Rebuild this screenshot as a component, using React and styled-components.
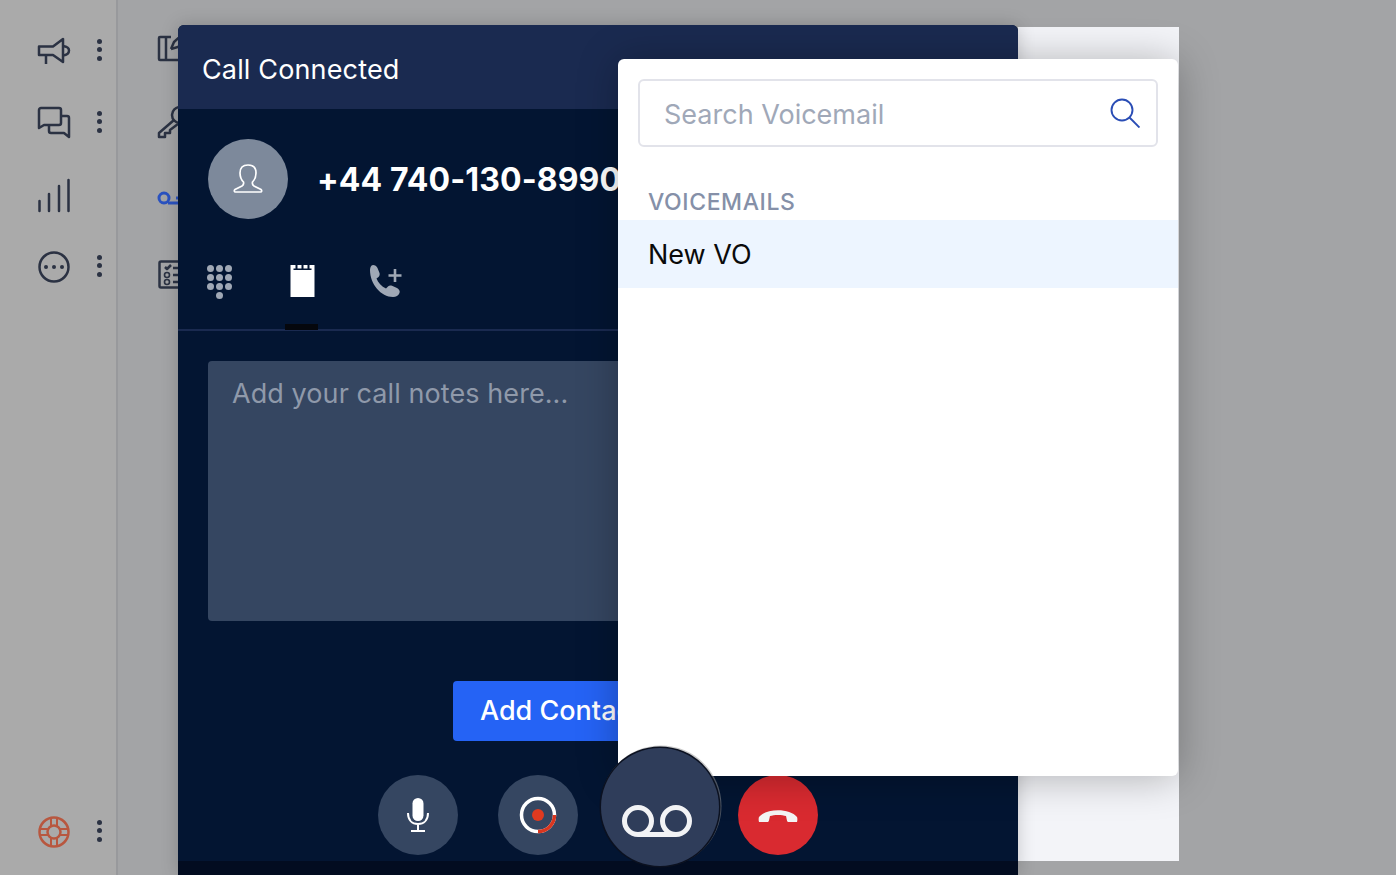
import React from 'react';
import styled, { createGlobalStyle } from 'styled-components';

const Global = createGlobalStyle`
  html, body { margin: 0; padding: 0; height: 100%; overflow: hidden; }
  body { font-family: Inter, "Noto Sans", "Liberation Sans", sans-serif; background: #a3a4a6; }
  #root { height: 100%; }
`;

const Page = styled.div`
  position: relative;
  display: flex;
  height: 100vh;
  overflow: hidden;
  background: #a3a4a6;
`;

const Rail = styled.nav`
  flex: none;
  box-sizing: border-box;
  width: 118px;
  padding-top: 15px;
  display: flex;
  flex-direction: column;
  background: #aaaaaa;
  border-right: 2px solid #98999c;
`;

const RailRow = styled.div`
  height: 72px;
  display: flex;
  align-items: center;
  padding-left: 38px;
  gap: 27px;
  color: ${(p) => p.$color || '#2b3243'};
`;

const RailFoot = styled(RailRow)`
  margin-top: auto;
  margin-bottom: 7px;
`;

const RailIcon = styled.svg`
  flex: none;
  width: 32px;
  height: 32px;
  overflow: visible;
  fill: none;
  stroke: currentColor;
  stroke-width: 2.5;
  stroke-linejoin: round;
`;

const Kebab = styled.span`
  display: flex;
  flex-direction: column;
  gap: 3.5px;
  margin-top: -3px;
  i { width: 5px; height: 5px; border-radius: 50%; background: #2b3243; }
`;

const SubRail = styled.div`
  flex: none;
  box-sizing: border-box;
  width: 60px;
  padding: 32px 0 0 40px;
  display: flex;
  flex-direction: column;
  gap: 44px;
  overflow: hidden;
`;

const SubIcon = styled.svg`
  flex: none;
  display: block;
  width: 32px;
  height: 32px;
  overflow: visible;
  fill: none;
  stroke: ${(p) => p.$color || '#2b3243'};
  stroke-width: ${(p) => p.$weight || 2.5};
  stroke-linejoin: round;
`;

const CallPanel = styled.section`
  flex: none;
  width: 840px;
  margin-top: 25px;
  display: flex;
  flex-direction: column;
  background: #031532;
  border-radius: 6px 6px 0 0;
  box-shadow: 0 0 18px rgba(0, 0, 0, 0.18);
  z-index: 1;
  overflow: hidden;
`;

const PanelHeader = styled.header`
  flex: none;
  height: 84px;
  box-sizing: border-box;
  padding: 4px 0 0 24px;
  display: flex;
  align-items: center;
  background: #1a2a50;
  color: #fff;
  font-size: 27px;
  letter-spacing: 0.15px;
`;

const Caller = styled.div`
  display: flex;
  align-items: center;
  gap: 29px;
  padding: 30px 0 0 30px;
`;

const Avatar = styled.div`
  width: 80px;
  height: 80px;
  border-radius: 50%;
  background: #7d899b;
  svg { display: block; width: 80px; height: 80px; fill: none; stroke: #fff; stroke-width: 1.7; }
`;

const Number = styled.div`
  color: #fff;
  font-size: 32px;
  font-weight: 700;
  letter-spacing: 0.1px;
  white-space: nowrap;
`;

const Tabs = styled.div`
  display: flex;
  height: 85px;
  margin-top: 27px;
  box-sizing: border-box;
  border-bottom: 2px solid #1a2a50;
`;

const Tab = styled.div`
  position: relative;
  width: 83px;
  padding-top: 19px;
  display: flex;
  justify-content: center;
  ${(p) => p.$active && `
    &::after {
      content: "";
      position: absolute;
      left: 24px;
      bottom: -1px;
      width: 33px;
      height: 6px;
      background: #05070d;
    }
  `}
`;

const Keypad = styled.div`
  display: grid;
  grid-template-columns: repeat(3, 7px);
  grid-auto-rows: 7px;
  gap: 2px;
  height: 34px;
  i { border-radius: 50%; background: #a0a8b5; }
  i:last-child { grid-column: 2; }
`;

const TabIcon = styled.svg`
  display: block;
  width: 34px;
  height: 34px;
`;

const Notes = styled.div`
  flex: 1;
  padding: 30px 30px 0;
`;

const NotesBox = styled.div`
  box-sizing: border-box;
  height: 260px;
  padding: 17px 24px;
  border-radius: 4px;
  background: #354661;
  color: #8f99aa;
  font-size: 27px;
  line-height: 32px;
  letter-spacing: 0.08px;
`;

const AddButton = styled.button`
  display: block;
  width: 290px;
  height: 60px;
  margin: 60px 0 0 245px;
  padding: 0 0 2px 27px;
  border: 0;
  border-radius: 4px;
  background: #2563f5;
  color: #fff;
  font: 500 27px Inter, "Noto Sans", sans-serif;
  text-align: left;
  white-space: nowrap;
`;

const Controls = styled.div`
  display: flex;
  gap: 40px;
  margin: 33px 0 6px 200px;
`;

const RoundButton = styled.button`
  flex: none;
  width: 80px;
  height: 80px;
  padding: 0;
  border: 0;
  border-radius: 50%;
  display: flex;
  align-items: center;
  justify-content: center;
  background: ${(p) => p.$bg || '#354661'};
  svg { display: block; }
`;

const Strip = styled.div`
  flex: none;
  height: 14px;
  background: #020c20;
`;

const Sheet = styled.div`
  flex: none;
  width: 161px;
  height: 834px;
  margin-top: 27px;
  background: #f3f4f8;
`;

const Popover = styled.aside`
  position: absolute;
  left: 618px;
  top: 59px;
  width: 560px;
  height: 717px;
  z-index: 2;
  background: #fff;
  border-radius: 6px;
  box-shadow: 0 2px 40px rgba(0, 0, 0, 0.28);
`;

const SearchBox = styled.div`
  box-sizing: border-box;
  height: 68px;
  margin: 20px 20px 0;
  padding: 2px 16px 0 24px;
  display: flex;
  align-items: center;
  justify-content: space-between;
  border: 2px solid #e2e3ea;
  border-radius: 6px;
  color: #a0a8b8;
  font-size: 27px;
  svg { display: block; width: 30px; height: 30px; margin-top: -2px; fill: none; stroke: #2a4db5; stroke-width: 1.9; }
`;

const SectionLabel = styled.div`
  margin: 41px 0 0 30px;
  height: 32px;
  line-height: 28px;
  color: #8590a8;
  font-size: 23px;
  font-weight: 500;
  letter-spacing: 0.6px;
`;

const VoicemailRow = styled.div`
  height: 68px;
  padding-left: 30px;
  display: flex;
  align-items: center;
  background: #edf5ff;
  color: #0a0a0a;
  font-size: 27px;
`;

const ActiveVoicemail = styled.button`
  position: absolute;
  left: 601px;
  top: 748px;
  z-index: 3;
  box-sizing: border-box;
  width: 118px;
  height: 118px;
  padding: 28px 0 0;
  border: 0;
  border-radius: 50%;
  display: flex;
  align-items: center;
  justify-content: center;
  background: #2f3d5a;
  box-shadow: 0 0 0 1.5px #0b1120, 1px -1px 0 1.5px rgba(150, 150, 150, 0.5);
  svg { display: block; margin-left: -6px; }
`;

const Dots = () => (
  <Kebab><i /><i /><i /></Kebab>
);

const App = () => (
  <Page>
    <Global />
    <Rail>
      <RailRow>
        <RailIcon viewBox="0 0 32 32">
          <path d="M1 11.500h14l10-7.500v23l-10-7H1z" />
          <path d="M25 11c4 .5 6 2 6 4.500S29 20 25 20.500M8 20v9" />
        </RailIcon>
        <Dots />
      </RailRow>
      <RailRow>
        <RailIcon viewBox="0 0 32 32">
          <path d="M3 1h18a2 2 0 0 1 2 2v13a2 2 0 0 1-2 2H6l-5 3V3a2 2 0 0 1 2-2z" />
          <path d="M23 9h6a2 2 0 0 1 2 2v19l-5-4H13a2 2 0 0 1-2-2v-6" />
        </RailIcon>
        <Dots />
      </RailRow>
      <RailRow>
        <RailIcon viewBox="0 0 32 32">
          <path strokeLinecap="round" d="M1.500 32v-10M11 32V15M21 32V7M30.500 32V1" />
        </RailIcon>
      </RailRow>
      <RailRow>
        <RailIcon viewBox="0 0 32 32">
          <circle cx="16" cy="16" r="14.500" />
          <circle cx="8" cy="16" r="2" fill="currentColor" stroke="none" />
          <circle cx="16" cy="16" r="2" fill="currentColor" stroke="none" />
          <circle cx="24" cy="16" r="2" fill="currentColor" stroke="none" />
        </RailIcon>
        <Dots />
      </RailRow>
      <RailFoot $color="#b8573f">
        <RailIcon viewBox="0 0 32 32">
          <circle cx="16" cy="16" r="14.500" />
          <circle cx="16" cy="16" r="6.500" />
          <path d="M13 2v8M19 2v8M13 22v8M19 22v8M2 13h8M2 19h8M22 13h8M22 19h8" strokeWidth="2" />
        </RailIcon>
        <Dots />
      </RailFoot>
    </Rail>

    <SubRail>
      <SubIcon viewBox="0 0 32 32">
        <path d="M13 5H2a1 1 0 0 0-1 1v21a1 1 0 0 0 1 1h30M8 5v23" />
        <path d="M13 17l3-7 10-9M13 17l7-2 10-9" />
      </SubIcon>
      <SubIcon viewBox="0 0 32 32">
        <circle cx="22" cy="7" r="8" />
        <path d="M16 12L1 25v4h6v-4h5v-3l8-6" />
      </SubIcon>
      <SubIcon viewBox="0 0 32 32" $color="#2a52c0" $weight={3}>
        <circle cx="6" cy="14" r="5" />
        <path d="M10 19h22M18 14h8" />
      </SubIcon>
      <SubIcon viewBox="0 0 32 32">
        <rect x="1.500" y="1.500" width="30" height="26" rx="1.500" />
        <path d="M7 7l2 2 4-4M15 8h14M15 15h14M15 22h14" />
        <circle cx="9" cy="15" r="2.500" strokeWidth="1.600" />
        <circle cx="9" cy="22" r="2.500" strokeWidth="1.600" />
      </SubIcon>
    </SubRail>

    <CallPanel>
      <PanelHeader>Call Connected</PanelHeader>
      <Caller>
        <Avatar>
          <svg viewBox="0 0 80 80">
            <path d="M32 34c0-5 3-8 8-8s8 3 8 8c0 4-1.500 7-3.500 9-.5 2 0 3 1.500 4l7 3.500c1 .8 1 2.500-.5 2.500H27.500c-1.500 0-1.500-1.700-.5-2.500l7-3.500c1.500-1 2-2 1.500-4-2-2-3.500-5-3.500-9z" />
          </svg>
        </Avatar>
        <Number>+44 740-130-8990</Number>
      </Caller>
      <Tabs>
        <Tab>
          <Keypad>
            {Array.from({ length: 10 }, (_, i) => <i key={i} />)}
          </Keypad>
        </Tab>
        <Tab $active>
          <TabIcon viewBox="0 0 34 34">
            <path fill="#fff" d="M4.500 0h24v32h-24z" />
            <path fill="#031532" d="M9.500 0h2v3.500h2V5h-6V3.500h2zM15.500 0h2v3.500h2V5h-6V3.500h2zM21.500 0h2v3.500h2V5h-6V3.500h2z" />
          </TabIcon>
        </Tab>
        <Tab>
          <TabIcon viewBox="0 0 34 34">
            <path fill="#a0a8b5" d="M4 0c2 0 3.500 1 4.500 3l2 5c.5 1.500 0 3-1 4l-2 1.500c1.500 4 5 8 9.500 10l2-2c1-1 2.500-1.300 4-.7l5 2.200c2 1 3.300 3 2.500 5-1 2.500-3.500 4-6.500 4C12 32 1 19 1 5c0-2 1-5 3-5z" />
            <path stroke="#a0a8b5" strokeWidth="2.600" d="M26 4v13M19.500 10.500h13" />
          </TabIcon>
        </Tab>
      </Tabs>
      <Notes>
        <NotesBox>Add your call notes here...</NotesBox>
        <AddButton>Add Contact</AddButton>
      </Notes>
      <Controls>
        <RoundButton aria-label="Mute">
          <svg width="24" height="36" viewBox="0 0 24 36" fill="none" stroke="#fff" strokeWidth="2">
            <rect x="6.500" y="1" width="11" height="23" rx="5.500" fill="#fff" stroke="none" />
            <path d="M2 16c0 7 4 11 10 11s10-4 10-11M12 27v6M5 34h14" />
          </svg>
        </RoundButton>
        <RoundButton aria-label="Record">
          <svg width="38" height="38" viewBox="0 0 38 38" fill="none" strokeWidth="3.500">
            <circle cx="19" cy="19" r="16.500" stroke="#fff" />
            <path d="M35.500 19A16.500 16.500 0 0 1 19 35.500" stroke="#d9361f" />
            <circle cx="19" cy="19" r="6" fill="#e03a20" stroke="none" />
          </svg>
        </RoundButton>
        <RoundButton as="div" $bg="transparent" />
        <RoundButton $bg="#d92a30" aria-label="Hang up">
          <svg width="40" height="16" viewBox="0 0 40 16">
            <path fill="#f4f4f4" d="M1 10C8 1 32 1 39 10c.5 1 .5 3 0 5h-9c-1 0-1.500-4-2-6-4-1.500-12-1.500-16 0-.5 2-1 6-2 6H1c-.5-2-.5-4 0-5z" />
          </svg>
        </RoundButton>
      </Controls>
      <Strip />
    </CallPanel>

    <Sheet />

    <Popover>
      <SearchBox>
        Search Voicemail
        <svg viewBox="0 0 30 30">
          <circle cx="12" cy="12" r="10.500" />
          <path d="M19.500 19.500L29.500 29.500" />
        </svg>
      </SearchBox>
      <SectionLabel>VOICEMAILS</SectionLabel>
      <VoicemailRow>New VO</VoicemailRow>
    </Popover>

    <ActiveVoicemail aria-label="Voicemail">
      <svg width="70" height="32" viewBox="0 0 70 32" fill="none" stroke="#f2f3f5" strokeWidth="5">
        <circle cx="16" cy="16" r="13.500" />
        <circle cx="54" cy="16" r="13.500" />
        <path d="M16 29.500h38" />
      </svg>
    </ActiveVoicemail>
  </Page>
);

export default App;
